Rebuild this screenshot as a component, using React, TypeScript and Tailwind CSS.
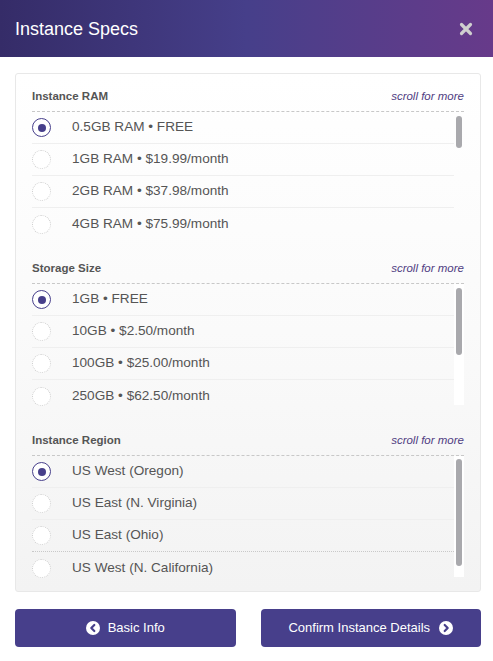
import React from "react";

type Section = {
  title: string;
  items: { label: string; dotted?: boolean }[];
  thumbTop: number;
  thumbH: number;
  trackH?: number;
};

const sections: Section[] = [
  {
    title: "Instance RAM",
    items: [
      { label: "0.5GB RAM • FREE" },
      { label: "1GB RAM • $19.99/month" },
      { label: "2GB RAM • $37.98/month" },
      { label: "4GB RAM • $75.99/month" },
    ],
    thumbTop: 4,
    thumbH: 32,
  },
  {
    title: "Storage Size",
    items: [
      { label: "1GB • FREE" },
      { label: "10GB • $2.50/month" },
      { label: "100GB • $25.00/month" },
      { label: "250GB • $62.50/month" },
    ],
    thumbTop: 4,
    thumbH: 67,
    trackH: 121,
  },
  {
    title: "Instance Region",
    items: [
      { label: "US West (Oregon)" },
      { label: "US East (N. Virginia)" },
      { label: "US East (Ohio)", dotted: true },
      { label: "US West (N. California)" },
    ],
    thumbTop: 3,
    thumbH: 107,
    trackH: 121,
  },
];

function Radio({ selected }: { selected: boolean }) {
  if (selected) {
    return (
      <div className="w-[19px] h-[19px] rounded-full border-[1.5px] border-[#473f8b] bg-white flex items-center justify-center shrink-0">
        <div className="w-[8px] h-[8px] rounded-full bg-[#473f8b]" />
      </div>
    );
  }
  return (
    <div className="w-[19px] h-[19px] rounded-full border border-dotted border-[#cfcfcf] bg-white shrink-0" />
  );
}

function SectionBlock({ s, first }: { s: Section; first: boolean }) {
  return (
    <div className={first ? "" : "mt-[19px]"}>
      <div className="flex items-center justify-between h-[14px] mb-[8px]">
        <span className="text-[11.5px] leading-[14px] font-bold text-[#555]">{s.title}</span>
        <span className="text-[11.5px] leading-[14px] italic text-[#4f3d82]">scroll for more</span>
      </div>
      <div className="border-t border-dashed border-[#c8c8c8] h-[131px] flex overflow-hidden">
        <div className="flex-1 flex flex-col">
          {s.items.map((it, i) => (
            <div
              key={i}
              className={
                "h-[32px] shrink-0 flex items-center " +
                (i < s.items.length - 1
                  ? it.dotted
                    ? "border-b border-dotted border-[#c9c9c9]"
                    : "border-b border-[#efefef]"
                  : "")
              }
            >
              <Radio selected={i === 0} />
              <span className="ml-[21px] text-[13.6px] text-[#555]">{it.label}</span>
            </div>
          ))}
        </div>
        <div className="w-[10px] shrink-0 flex flex-col">
          <div
            className={"w-[10px] flex flex-col items-center " + (s.trackH ? "bg-white" : "")}
            style={{ height: s.trackH ? s.trackH : 40, paddingTop: s.thumbTop }}
          >
            <div className="w-[6px] rounded-full bg-[#a9a9ad]" style={{ height: s.thumbH }} />
          </div>
        </div>
      </div>
    </div>
  );
}

export default function App() {
  return (
    <div
      className="w-[493px] h-[661px] bg-white flex flex-col"
      style={{ fontFamily: '"Liberation Sans", Arial, sans-serif' }}
    >
      <div className="h-[57px] shrink-0 bg-linear-to-r from-[#352c68] via-[#463f8a] to-[#673a8a] flex items-center justify-between pl-[15px] pr-[20px]">
        <span className="text-white text-[18px] leading-none">Instance Specs</span>
        <svg width="14" height="14" viewBox="0 0 14 14">
          <path d="M2.5 2.5 L11.5 11.5 M11.5 2.5 L2.5 11.5" stroke="#cfcfcf" strokeWidth="3.2" strokeLinecap="round" />
        </svg>
      </div>
      <div className="ml-[15px] mr-[12px] mt-[16px] border border-[#e8e8e8] rounded-[3px] bg-linear-to-b from-white via-[#fafafa] to-[#f3f3f3] pl-[16px] pr-[16px] pt-[15px] pb-[5px]">
        {sections.map((s, i) => (
          <SectionBlock key={i} s={s} first={i === 0} />
        ))}
      </div>
      <div className="ml-[15px] mr-[12px] mt-[17px] flex gap-[25px]">
        <button className="flex-1 h-[38px] rounded-[4px] bg-[#473f8b] text-white text-[13px] flex items-center justify-center gap-[8px]">
          <svg width="14" height="14" viewBox="0 0 14 14">
            <circle cx="7" cy="7" r="7" fill="white" />
            <path d="M8.3 4 L5.3 7 L8.3 10" stroke="#473f8b" strokeWidth="2.2" fill="none" strokeLinecap="round" strokeLinejoin="round" />
          </svg>
          <span>Basic Info</span>
        </button>
        <button className="flex-1 h-[38px] rounded-[4px] bg-[#473f8b] text-white text-[13px] flex items-center justify-center gap-[9px]">
          <span>Confirm Instance Details</span>
          <svg width="14" height="14" viewBox="0 0 14 14">
            <circle cx="7" cy="7" r="7" fill="white" />
            <path d="M5.7 4 L8.7 7 L5.7 10" stroke="#473f8b" strokeWidth="2.2" fill="none" strokeLinecap="round" strokeLinejoin="round" />
          </svg>
        </button>
      </div>
    </div>
  );
}
